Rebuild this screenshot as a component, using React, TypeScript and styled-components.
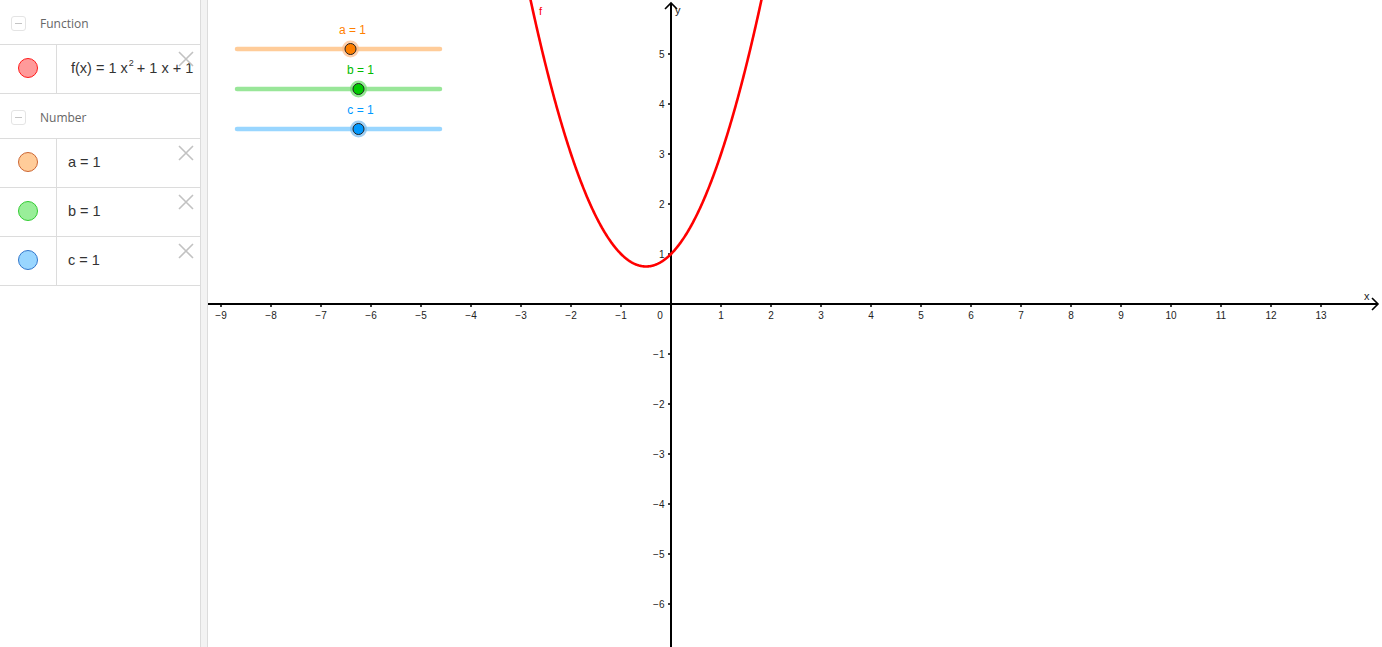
import React from "react";
import styled, { createGlobalStyle } from "styled-components";

const GlobalStyle = createGlobalStyle`
  html, body {
    margin: 0;
    padding: 0;
    background: #fff;
    overflow: hidden;
  }
  body {
    font-family: "Open Sans", "Liberation Sans", sans-serif;
  }
`;

const Page = styled.div`
  display: flex;
  width: 100vw;
  height: 100vh;
`;

const Sidebar = styled.aside`
  width: 200px;
  flex: none;
  display: flex;
  flex-direction: column;
  border-right: 1px solid #dcdcdc;
  background: #fff;
`;

const GroupHeader = styled.div`
  height: 45px;
  display: flex;
  align-items: center;
  gap: 14px;
  padding: 3px 0 0 11px;
  box-sizing: border-box;
  border-bottom: 1px solid #dcdcdc;
  color: #666;
  font-size: 12px;
`;

const Toggle = styled.span`
  width: 13px;
  height: 13px;
  border: 1px solid #e4e4e4;
  border-radius: 3px;
  display: flex;
  align-items: center;
  justify-content: center;

  &::after {
    content: "";
    width: 7px;
    height: 1px;
    background: #c4c4c4;
  }
`;

const Row = styled.div`
  height: 48px;
  display: flex;
  border-bottom: 1px solid #dcdcdc;
  position: relative;
`;

const MarbleCell = styled.div`
  width: 56px;
  flex: none;
  display: flex;
  align-items: center;
  justify-content: center;
  border-right: 1px solid #dcdcdc;
`;

const Marble = styled.span<{ $fill: string; $edge: string }>`
  width: 18px;
  height: 18px;
  border-radius: 50%;
  background: ${(p) => p.$fill};
  border: 1px solid ${(p) => p.$edge};
  margin-top: -3px;
`;

const Formula = styled.div<{ $indent: number }>`
  flex: 1;
  display: flex;
  align-items: center;
  padding-left: ${(p) => p.$indent}px;
  padding-bottom: 2px;
  font-family: "Liberation Sans", Arial, sans-serif;
  font-size: 14.5px;
  color: #333;
  white-space: nowrap;
  overflow: hidden;

  sup {
    font-size: 9px;
    line-height: 1;
    align-self: flex-start;
    margin: 14px 3px 0 1px;
  }
`;

const CloseButton = styled.span`
  position: absolute;
  top: 6px;
  right: 6px;
  width: 16px;
  height: 16px;
  display: flex;
`;

const Divider = styled.div`
  width: 6px;
  flex: none;
  background: #f3f3f3;
  border-right: 1px solid #dcdcdc;
`;

const Graph = styled.main`
  flex: 1;
  min-width: 0;
  overflow: hidden;
`;

const TickLabel = styled.text`
  font-family: "Liberation Sans", Arial, sans-serif;
  font-size: 10px;
  fill: #222;
`;

const AxisName = styled.text`
  font-family: "Liberation Sans", Arial, sans-serif;
  font-size: 11px;
  fill: #222;
`;

const SliderLabel = styled.text<{ $color: string }>`
  font-family: "Liberation Sans", Arial, sans-serif;
  font-size: 12px;
  fill: ${(p) => p.$color};
`;

const X0 = 671;
const Y0 = 304;
const UNIT = 50;

const CloseIcon = () => (
  <svg width="16" height="16" viewBox="0 0 16 16">
    <path d="M1 1 L15 15 M15 1 L1 15" stroke="#c2c2c2" strokeWidth="1.6" fill="none" />
  </svg>
);

type Item = { fill: string; edge: string; indent: number; body: React.ReactNode };

const groups: { title: string; items: Item[] }[] = [
  {
    title: "Function",
    items: [
      {
        fill: "#ff9a9a",
        edge: "#ff1a1a",
        indent: 14,
        body: (
          <>
            f(x) = 1 x<sup>2</sup>+ 1 x + 1
          </>
        ),
      },
    ],
  },
  {
    title: "Number",
    items: [
      { fill: "#ffcc99", edge: "#cc6633", indent: 11, body: "a = 1" },
      { fill: "#99ee99", edge: "#33cc33", indent: 11, body: "b = 1" },
      { fill: "#99d6ff", edge: "#3377cc", indent: 11, body: "c = 1" },
    ],
  },
];

const sliders = [
  { name: "a", y: 49, knob: 350.5, track: "#ffcc99", halo: "#ffbb88", fill: "#ff7f00", label: "#ff7f00" },
  { name: "b", y: 89, knob: 358.5, track: "#99e699", halo: "#66dd66", fill: "#00cc00", label: "#00bb00" },
  { name: "c", y: 129, knob: 358.5, track: "#99d6ff", halo: "#77bbee", fill: "#0099ff", label: "#0099ff" },
];

const Slider = ({ s }: { s: (typeof sliders)[number] }) => (
  <g>
    <line x1={237} y1={s.y} x2={440} y2={s.y} stroke={s.track} strokeWidth={4.5} strokeLinecap="round" />
    <circle cx={s.knob} cy={s.y} r={8.5} fill={s.halo} opacity={0.7} />
    <circle cx={s.knob} cy={s.y} r={5.5} fill={s.fill} stroke="#222" strokeWidth={1} />
    <SliderLabel $color={s.label} x={s.knob + 2} y={s.y - 15} textAnchor="middle">
      {s.name} = 1
    </SliderLabel>
  </g>
);

const parabola = () => {
  const pts: string[] = [];
  for (let x = -2.9; x <= 1.9; x += 0.01) {
    const y = x * x + x + 1;
    pts.push(`${(X0 + x * UNIT).toFixed(2)},${(Y0 - y * UNIT).toFixed(2)}`);
  }
  return "M" + pts.join(" L");
};

const fmt = (n: number) => (n < 0 ? `\u2212${-n}` : `${n}`);

const Plot = () => {
  const xs = Array.from({ length: 23 }, (_, i) => i - 9);
  const ys = Array.from({ length: 12 }, (_, i) => 5 - i);
  return (
    <svg width="100%" height="647" viewBox="208 0 1174 647" preserveAspectRatio="xMinYMin meet">
      <defs>
        <clipPath id="area">
          <rect x={208} y={0} width={1174} height={647} />
        </clipPath>
      </defs>

      {/* axes */}
      <line x1={208} y1={Y0} x2={1377} y2={Y0} stroke="#000" strokeWidth={2} />
      <path d="M1372 298 L1378 304 L1372 310" stroke="#000" strokeWidth={1.6} fill="none" />
      <line x1={X0} y1={3} x2={X0} y2={647} stroke="#000" strokeWidth={2} />
      <path d="M665 9 L671 3 L677 9" stroke="#000" strokeWidth={1.6} fill="none" />
      <AxisName x={1364} y={300}>x</AxisName>
      <AxisName x={675} y={14}>y</AxisName>

      {xs.map((n) => {
        const px = X0 + n * UNIT;
        if (n === 0) {
          return (
            <TickLabel key={n} x={660} y={318.5} textAnchor="middle">
              0
            </TickLabel>
          );
        }
        return (
          <g key={n}>
            <line x1={px} y1={Y0} x2={px} y2={Y0 + 3} stroke="#000" strokeWidth={1.5} />
            <TickLabel x={px} y={318.5} textAnchor="middle">
              {fmt(n)}
            </TickLabel>
          </g>
        );
      })}

      {ys
        .filter((n) => n !== 0)
        .map((n) => {
          const py = Y0 - n * UNIT;
          return (
            <g key={n}>
              <line x1={X0 - 3} y1={py} x2={X0} y2={py} stroke="#000" strokeWidth={1.5} />
              <TickLabel x={664.5} y={py + 3.5} textAnchor="end">
                {fmt(n)}
              </TickLabel>
            </g>
          );
        })}

      <path d={parabola()} stroke="#ff0000" strokeWidth={2.6} fill="none" clipPath="url(#area)" />
      <TickLabel x={539} y={15} style={{ fill: "#ff0000", fontSize: 11 }}>
        f
      </TickLabel>

      {sliders.map((s) => (
        <Slider key={s.name} s={s} />
      ))}
    </svg>
  );
};

export default function App() {
  return (
    <>
      <GlobalStyle />
      <Page>
        <Sidebar>
          {groups.map((g) => (
            <React.Fragment key={g.title}>
              <GroupHeader>
                <Toggle />
                {g.title}
              </GroupHeader>
              {g.items.map((it, i) => (
                <Row key={i}>
                  <MarbleCell>
                    <Marble $fill={it.fill} $edge={it.edge} />
                  </MarbleCell>
                  <Formula $indent={it.indent}>{it.body}</Formula>
                  <CloseButton>
                    <CloseIcon />
                  </CloseButton>
                </Row>
              ))}
            </React.Fragment>
          ))}
        </Sidebar>
        <Divider />
        <Graph>
          <Plot />
        </Graph>
      </Page>
    </>
  );
}
